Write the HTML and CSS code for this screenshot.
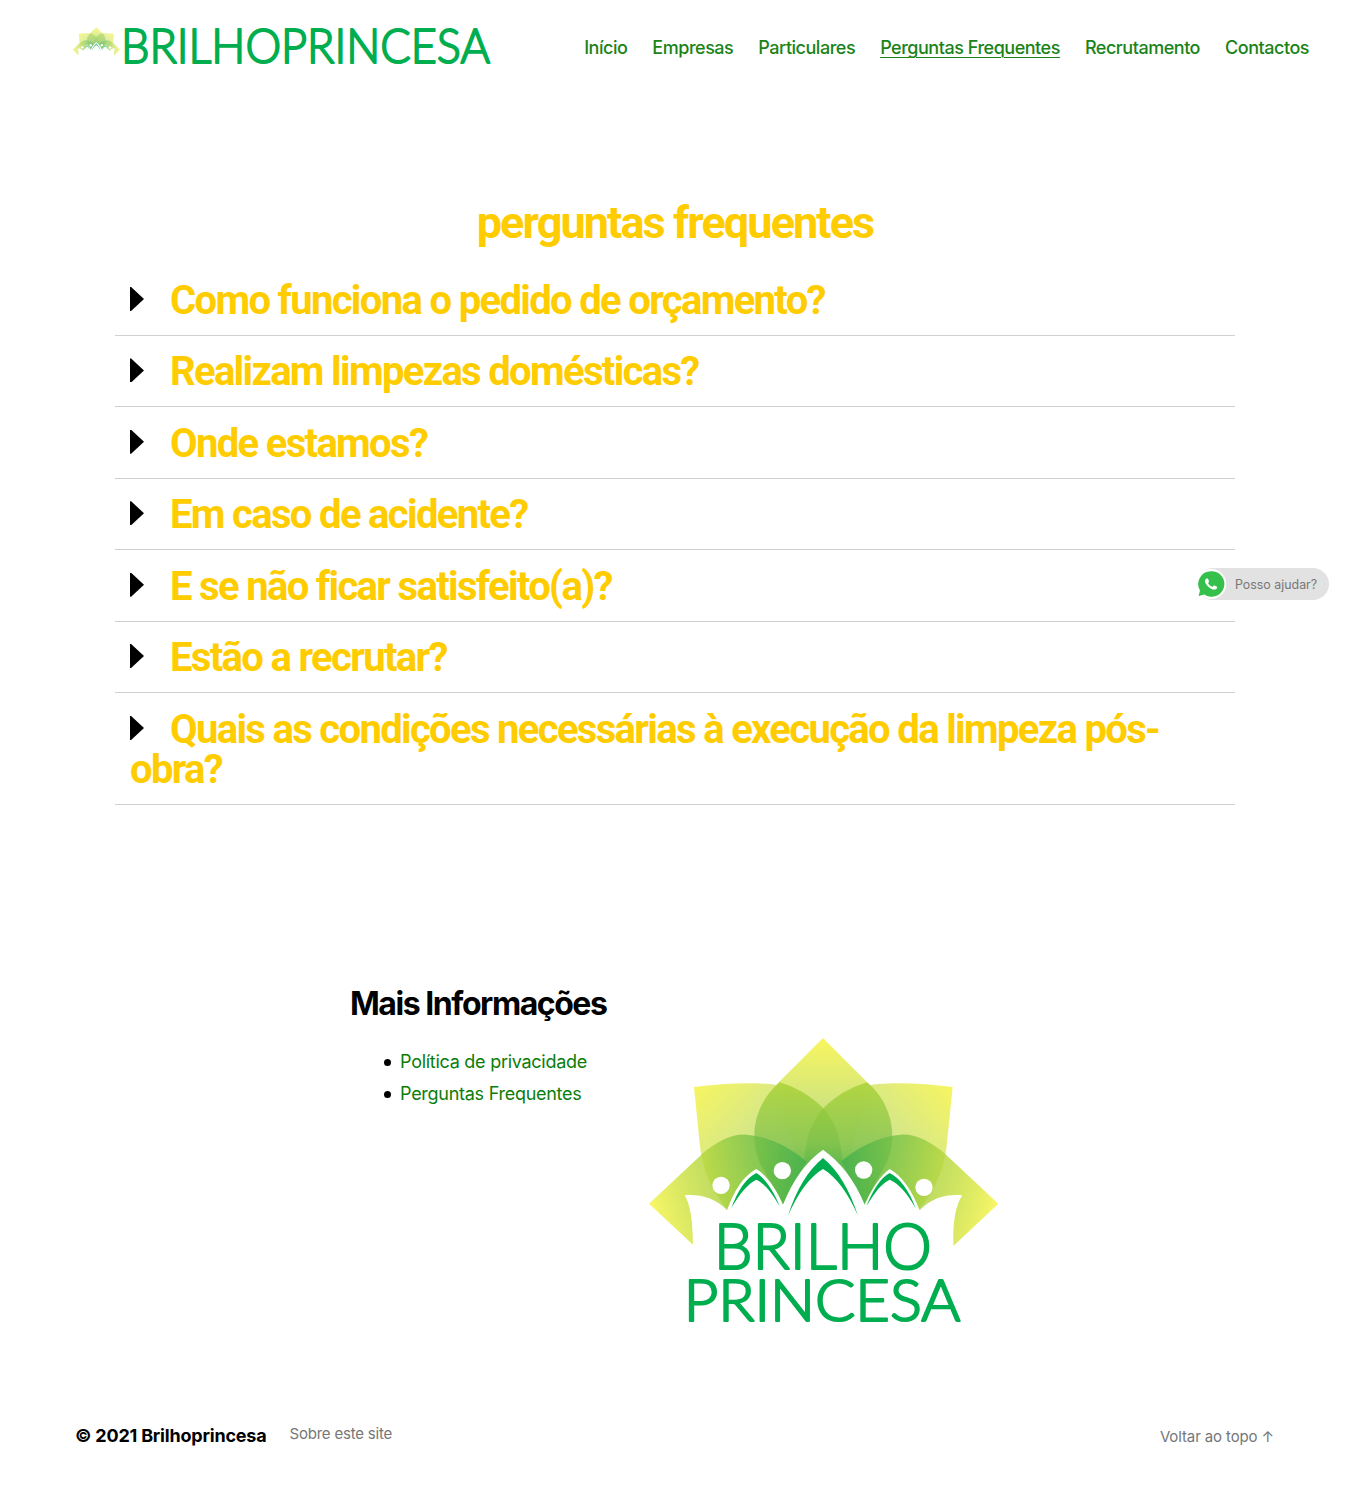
FILE: index.html
```html
<!DOCTYPE html>
<html lang="pt">
<head>
<meta charset="utf-8">
<title>Perguntas Frequentes – Brilhoprincesa</title>
<link rel="stylesheet" href="styles.css">
</head>
<body>
<svg class="defs" width="0" height="0" aria-hidden="true">
  <defs>
    <linearGradient id="gTop" x1="0.5" y1="0" x2="0.5" y2="1">
      <stop offset="0" stop-color="#f8f65f"/><stop offset="0.4" stop-color="#d2e57c"/><stop offset="1" stop-color="#a8d56a"/>
    </linearGradient>
    <linearGradient id="gTear" x1="0.5" y1="0" x2="0.5" y2="1">
      <stop offset="0" stop-color="#a4cf2e" stop-opacity=".75"/><stop offset="0.5" stop-color="#7cc04a" stop-opacity=".7"/><stop offset="1" stop-color="#1fa84f" stop-opacity=".8"/>
    </linearGradient>
    <linearGradient id="gUL" x1="0" y1="0" x2="1" y2="0.8">
      <stop offset="0" stop-color="#f8f65f"/><stop offset="0.45" stop-color="#d3e68a"/><stop offset="1" stop-color="#a5d46e"/>
    </linearGradient>
    <linearGradient id="gUR" x1="1" y1="0" x2="0" y2="0.8">
      <stop offset="0" stop-color="#f8f65f"/><stop offset="0.45" stop-color="#d3e68a"/><stop offset="1" stop-color="#a5d46e"/>
    </linearGradient>
    <linearGradient id="gFL" x1="0" y1="0.6" x2="1" y2="0.4">
      <stop offset="0" stop-color="#f8f65f" stop-opacity=".95"/><stop offset="0.4" stop-color="#b4d63a" stop-opacity=".8"/><stop offset="1" stop-color="#3fae4a" stop-opacity=".7"/>
    </linearGradient>
    <linearGradient id="gFR" x1="1" y1="0.6" x2="0" y2="0.4">
      <stop offset="0" stop-color="#f8f65f" stop-opacity=".95"/><stop offset="0.4" stop-color="#b4d63a" stop-opacity=".8"/><stop offset="1" stop-color="#3fae4a" stop-opacity=".7"/>
    </linearGradient>
    <symbol id="lotus" viewBox="0 0 1110 660">
      <path fill="url(#gUL)" d="M163 172 C300 155 450 150 520 205 C580 260 605 340 610 410 L430 525 L265 540 C210 480 185 400 180 340 Z"/>
      <path fill="url(#gUR)" d="M939 172 C802 155 652 150 582 205 C522 260 497 340 492 410 L672 525 L837 540 C892 480 917 400 922 340 Z"/>
      <path fill="url(#gTop)" d="M550 25 L690 165 L620 420 L550 500 L480 420 L410 165 Z"/>
      <path fill="url(#gTear)" d="M420 158 C340 225 320 340 375 425 L430 525 L610 410 C605 330 590 280 550 235 C510 195 465 172 420 158 Z"/>
      <path fill="url(#gTear)" d="M682 158 C762 225 782 340 727 425 L672 525 L492 410 C497 330 512 280 552 235 C592 195 637 172 682 158 Z"/>
      <path fill="url(#gFL)" d="M28 522 L185 375 C230 335 280 312 320 315 C390 320 450 355 500 395 L430 525 L262 560 L160 645 Z"/>
      <path fill="url(#gFR)" d="M1076 522 L919 375 C874 335 824 312 784 315 C714 320 654 355 604 395 L672 525 L840 560 L942 648 Z"/>
      <path fill="#fff" d="M135 497 C180 493 228 505 262 542 C285 480 310 440 350 418 C385 440 410 480 430 525 C460 450 500 395 550 360 C600 395 645 450 675 525 C695 480 720 440 750 418 C790 440 820 490 840 542 C875 505 920 493 968 497 C945 530 938 590 942 660 L160 660 C160 590 155 530 135 497 Z"/>
      <circle fill="#fff" cx="244" cy="467" r="26"/>
      <circle fill="#fff" cx="428" cy="423" r="26"/>
      <circle fill="#fff" cx="672" cy="421" r="26"/>
      <circle fill="#fff" cx="853" cy="473" r="26"/>
      <path fill="#00ae4f" d="M275 535 C295 480 320 445 350 430 C375 445 402 482 420 530 C395 488 375 462 350 450 C325 462 300 492 275 535 Z"/>
      <path fill="#00ae4f" d="M680 530 C700 482 722 445 750 430 C780 445 808 482 828 535 C803 492 778 462 750 450 C725 462 705 488 680 530 Z"/>
      <path fill="#00ae4f" d="M445 558 C470 480 505 422 550 385 C595 422 630 480 655 558 C625 490 590 442 550 418 C510 442 475 490 445 558 Z"/>
    </symbol>
  </defs>
</svg>

<header class="site-header">
  <a class="brand" href="#" aria-label="Brilho Princesa">
    <svg class="brand-mark" viewBox="0 0 1110 660"><use href="#lotus"/></svg>
    <svg class="brand-word" viewBox="0 0 370 50"><text class="word" x="-1" y="43" textLength="369" lengthAdjust="spacingAndGlyphs">BRILHOPRINCESA</text></svg>
  </a>
  <nav class="nav">
    <a href="#">Início</a>
    <a href="#">Empresas</a>
    <a href="#">Particulares</a>
    <a href="#" class="current">Perguntas Frequentes</a>
    <a href="#">Recrutamento</a>
    <a href="#">Contactos</a>
  </nav>
</header>

<main class="content">
  <h1 class="page-title">perguntas frequentes</h1>
  <div class="faq">
    <details><summary>Como funciona o pedido de orçamento?</summary></details>
    <details><summary>Realizam limpezas domésticas?</summary></details>
    <details><summary>Onde estamos?</summary></details>
    <details><summary>Em caso de acidente?</summary></details>
    <details><summary>E se não ficar satisfeito(a)?</summary></details>
    <details><summary>Estão a recrutar?</summary></details>
    <details><summary>Quais as condições necessárias à execução da limpeza pós-obra?</summary></details>
  </div>
</main>

<section class="widgets">
  <div class="widget-links">
    <h2>Mais Informações</h2>
    <ul>
      <li><a href="#">Política de privacidade</a></li>
      <li><a href="#">Perguntas Frequentes</a></li>
    </ul>
  </div>
  <svg class="footer-logo" viewBox="28 25 1050 870" role="img" aria-label="Brilho Princesa">
    <use href="#lotus" x="0" y="0" width="1110" height="660"/>
    <text class="word big" x="222" y="719" textLength="655" lengthAdjust="spacingAndGlyphs">BRILHO</text>
    <text class="word big small" x="132" y="875" textLength="830" lengthAdjust="spacingAndGlyphs">PRINCESA</text>
  </svg>
</section>

<footer class="site-footer">
  <div class="foot-left">
    <strong>© 2021 Brilhoprincesa</strong>
    <a href="#">Sobre este site</a>
  </div>
  <a class="to-top" href="#">Voltar ao topo ↑</a>
</footer>

<a class="whatsapp" href="#">
  <svg class="wa-icon" viewBox="0 0 32 32">
    <path fill="#fff" d="M16 1a15 15 0 0 0-13 22.4L1 31l7.8-2A15 15 0 1 0 16 1Z"/>
    <path fill="#35c04c" d="M16 3.2A12.8 12.8 0 0 0 5 22.5l-1.4 5.6 5.8-1.5A12.8 12.8 0 1 0 16 3.2Z"/>
    <path fill="#fff" transform="translate(4 4)" d="M17.472 14.382c-.297-.149-1.758-.867-2.03-.967-.273-.099-.471-.148-.67.15-.197.297-.767.966-.94 1.164-.173.199-.347.223-.644.075-.297-.15-1.255-.463-2.39-1.475-.883-.788-1.48-1.761-1.653-2.059-.173-.297-.018-.458.13-.606.134-.133.298-.347.446-.52.149-.174.198-.298.298-.497.099-.198.05-.371-.025-.52-.075-.149-.669-1.612-.916-2.207-.242-.579-.487-.5-.669-.51-.173-.008-.371-.01-.57-.01-.198 0-.52.074-.792.372-.272.297-1.04 1.016-1.04 2.479 0 1.462 1.065 2.875 1.213 3.074.149.198 2.096 3.2 5.077 4.487.709.306 1.262.489 1.694.625.712.227 1.36.195 1.871.118.571-.085 1.758-.719 2.006-1.413.248-.694.248-1.289.173-1.413-.074-.124-.272-.198-.57-.347Z"/>
  </svg>
  <span>Posso ajudar?</span>
</a>
</body>
</html>
```

FILE: styles.css
```css
* { box-sizing: border-box; }
html, body { margin: 0; padding: 0; }
body {
  background: #fff;
  color: #000;
  font-family: Inter, "Liberation Sans", sans-serif;
  font-size: 18px;
  height: 1492px;
  overflow: hidden;
}
a { text-decoration: none; }
.defs { position: absolute; }

.site-header {
  display: flex;
  justify-content: space-between;
  align-items: center;
  height: 95px;
  padding: 0 40px 0 71px;
}
.brand { display: flex; align-items: flex-start; height: 50px; margin-top: -6px; }
.brand-mark { width: 51px; height: 30px; margin-top: 6px; opacity: .75; }
.brand-word { width: 370px; height: 50px; overflow: visible; }
.word {
  font-family: Lato, "Open Sans", sans-serif;
  font-weight: 300;
  font-size: 48px;
  fill: #00ae4f;
  stroke: #00ae4f;
  stroke-width: 2px;
  stroke-linejoin: round;
}
.word.big { font-size: 192px; stroke-width: 6.5px; }
.word.small { font-size: 170px; }

.nav { display: flex; gap: 25px; margin-top: 1px; }
.nav a {
  color: #1a8317;
  font-size: 18px;
  font-weight: 500;
  letter-spacing: -0.475px;
  line-height: 24px;
}
.nav a.current { text-decoration: underline; text-underline-offset: 3px; text-decoration-thickness: 1px; }

.content { width: 1120px; margin: 0 auto 0 115px; padding-top: 102px; }
.page-title {
  margin: 0 0 15.6px;
  text-align: center;
  color: #ffcc00;
  font-family: Roboto, sans-serif;
  font-size: 45px;
  font-weight: 700;
  letter-spacing: -1.9px;
  line-height: 52px;
}
.faq details { border-bottom: 1px solid #d0d0d0; }
.faq summary {
  padding: 16.45px 15px 13.98px;
  color: #ffcc00;
  font-family: Roboto, sans-serif;
  font-size: 40px;
  font-weight: 700;
  letter-spacing: -1.67px;
  line-height: 40px;
  list-style: none;
}
.faq details:last-child summary { padding-top: 17px; }
.faq summary::-webkit-details-marker { display: none; }
.faq summary::before {
  content: "";
  display: inline-block;
  width: 14px;
  height: 24px;
  margin-right: 26px;
  background: #000;
  clip-path: polygon(0 0, 8% 0, 100% 50%, 8% 100%, 0 100%);
  vertical-align: 3px;
}

.widgets { display: flex; justify-content: center; margin-top: 181px; }
.widget-links { width: 299px; }
.widget-links h2 {
  margin: 0 0 24px;
  font-size: 32px;
  font-weight: 700;
  letter-spacing: -1.45px;
  line-height: 36px;
}
.widget-links ul { margin: 0; padding: 0 0 0 50px; list-style: none; }
.widget-links li { line-height: 32px; letter-spacing: -0.27px; }
.widget-links li::before {
  content: "";
  display: inline-block;
  width: 7px;
  height: 7px;
  margin: 0 9px 2px -16px;
  border-radius: 50%;
  background: #000;
}
.widget-links a { color: #0a7d0a; }
.footer-logo { width: 350px; height: 290px; margin-top: 52px; overflow: visible; }

.site-footer {
  display: flex;
  justify-content: space-between;
  align-items: center;
  padding: 0 75px;
  margin-top: 96px;
}
.foot-left { display: flex; align-items: center; gap: 23px; }
.foot-left strong { font-weight: 700; letter-spacing: -0.2px; }
.foot-left a { color: #767676; font-size: 15px; letter-spacing: -0.2px; margin-top: -4px; }
.to-top { color: #767676; font-size: 15px; letter-spacing: -0.12px; margin-top: 3px; }

.whatsapp {
  position: fixed;
  top: 568px;
  right: 20px;
  width: 132px;
  height: 32px;
  display: flex;
  align-items: center;
  background: #e2e2e2;
  border-radius: 16px;
  color: #777;
  font-size: 12.4px;
  padding-left: 38px;
}
.wa-icon { position: absolute; left: -2px; top: 0; width: 32px; height: 32px; }
```
